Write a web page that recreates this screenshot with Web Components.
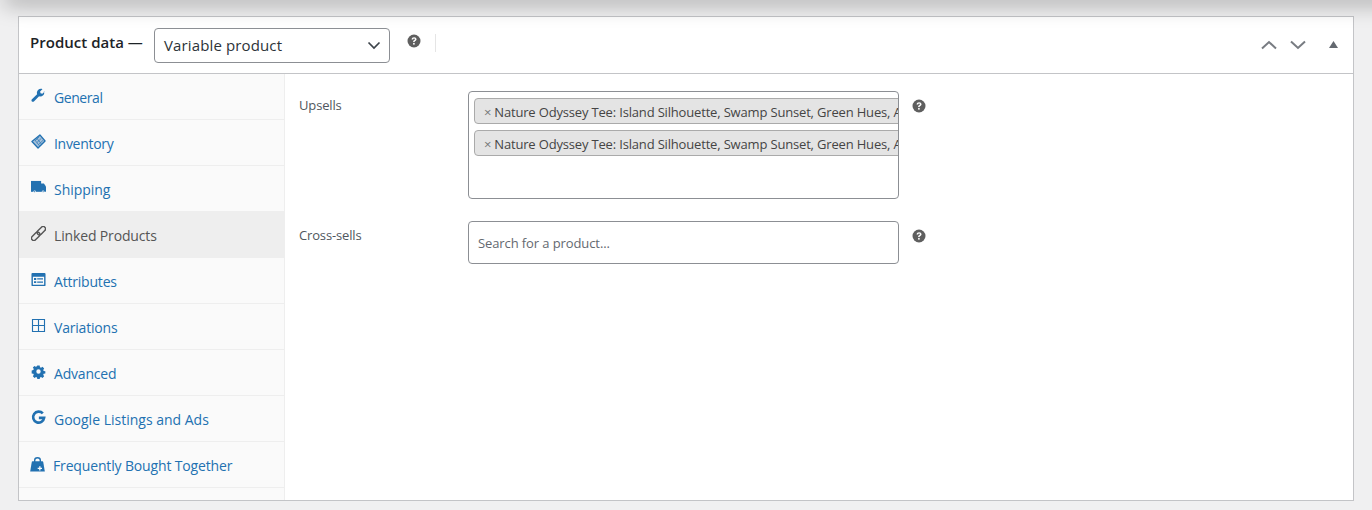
<!DOCTYPE html>
<html>
<head>
<meta charset="utf-8">
<title>Product data</title>
<style>
    html, body { margin: 0; height: 510px; overflow: hidden; background: #f0f0f1; }
    body { font-family: "Open Sans", "Liberation Sans", sans-serif; font-size: 13px; color: #50575e; }
</style>
</head>
<body>
<product-page>
    <pd-header slot="header" title-text="Product data —" type="Variable product"></pd-header>
    <pd-tab slot="tabs" label="General" icon="wrench" style="--ls:-.42px"></pd-tab>
    <pd-tab slot="tabs" label="Inventory" icon="tag" style="--ls:-.3px"></pd-tab>
    <pd-tab slot="tabs" label="Shipping" icon="truck" style="--ls:-.05px"></pd-tab>
    <pd-tab slot="tabs" label="Linked Products" icon="link" active style="--ls:-.15px"></pd-tab>
    <pd-tab slot="tabs" label="Attributes" icon="list" style="--ls:-.2px"></pd-tab>
    <pd-tab slot="tabs" label="Variations" icon="grid" style="--ls:-.2px"></pd-tab>
    <pd-tab slot="tabs" label="Advanced" icon="gear" style="--ls:-.2px"></pd-tab>
    <pd-tab slot="tabs" label="Google Listings and Ads" icon="google" style="--ls:0px"></pd-tab>
    <pd-tab slot="tabs" label="Frequently Bought Together" icon="bag" tight style="--ls:-.15px"></pd-tab>

    <pd-field label="Upsells" style="--field-h:108px">
        <pd-chip>Nature Odyssey Tee: Island Silhouette, Swamp Sunset, Green Hues, Adventure Tee</pd-chip>
        <pd-chip>Nature Odyssey Tee: Island Silhouette, Swamp Sunset, Green Hues, Adventure Tee</pd-chip>
    </pd-field>
    <pd-field label="Cross-sells" placeholder="Search for a product..." style="--field-h:43px"></pd-field>
</product-page>

<script>
const ICONS = {
    wrench: '<path d="M14.6 3.6l-2.5 2.5-1.9-.5-.5-1.9L12.2 1.2C10.6.6 8.7 1 7.5 2.2 6.3 3.4 6 5.1 6.5 6.6L1 12.1c-.7.7-.7 1.6-.1 2.2.6.6 1.6.6 2.2 0l5.5-5.5c1.5.5 3.2.1 4.4-1.1 1.2-1.2 1.5-2.9.6-4.1z"/>',
    tag: '<path d="M9.500 1l5.500 6.500-7.500 7.500L1 8z" fill="#a5c0da" stroke="currentColor" stroke-width="1.400" stroke-linejoin="round"/><path d="M4.300 7.300L9 2.800M6.100 9.300L11 4.600M8 11.300L13 6.600M6.500 4.900L11 10.600M4.500 6.900L9 12.600" stroke="currentColor" stroke-width=".7" fill="none"/>',
    truck: '<path d="M0 1h10.800v11.600H0z"/><path d="M10.500 3.800h3.300L16 7v5.600h-5.500z"/><circle cx="3.900" cy="12.400" r="1.300" fill="#fafafa"/><circle cx="12.900" cy="12.400" r="1.300" fill="#fafafa"/><circle cx="3.900" cy="12.400" r=".6"/><circle cx="12.900" cy="12.400" r=".6"/>',
    link: '<g transform="rotate(-45 8 8)" fill="none" stroke="currentColor" stroke-width="1.500"><rect x="-1.500" y="5.500" width="10.500" height="5" rx="2.500"/><rect x="7" y="5.500" width="10.500" height="5" rx="2.500"/></g>',
    list: '<path fill-rule="evenodd" d="M1.500 1h13c.6 0 1 .4 1 1v12c0 .6-.4 1-1 1h-13c-.6 0-1-.4-1-1V2c0-.6.4-1 1-1zM2 5v8.500h12V5z"/><path d="M3.200 6.400h2.400v2H3.200zM3.200 9.800h2.400v2H3.200zM6.600 6.600h6.200v1.500H6.600zM6.600 10h6.200v1.500H6.600z"/>',
    grid: '<path fill-rule="evenodd" d="M1 1h14v14H1zM2.200 2.200v5.200h5.200V2.200zM8.600 2.200v5.200h5.200V2.200zM2.200 8.600v5.200h5.200V8.600zM8.600 8.600v5.200h5.200V8.600z"/>',
    gear: '<path fill-rule="evenodd" d="M6.600 1h2.800l.4 2 1.200.5 1.700-1.100 2 2-1.100 1.700.5 1.200 2 .4v2.600l-2 .4-.5 1.200 1.100 1.700-2 2-1.700-1.100-1.200.5-.4 2H6.600l-.4-2-1.200-.5-1.700 1.100-2-2 1.100-1.700-.5-1.200-2-.4V6.700l2-.4.500-1.200-1.100-1.700 2-2L4.600 2.500 5.800 2zM8 5.400a2.600 2.600 0 1 0 0 5.200 2.600 2.600 0 0 0 0-5.200z" transform="translate(.8 .8) scale(.9)"/>',
    google: '<path d="M12.600 3.700A5.900 5.900 0 1 0 14 8.400H8.400" fill="none" stroke="currentColor" stroke-width="2.800"/>',
    bag: '<path d="M5 5.500V3.400C5 1.700 6.300.8 8 .8s3 .9 3 2.600v2.100" fill="none" stroke="currentColor" stroke-width="1.500"/><path d="M2.700 4.500h10.600c.4 0 .7.300.8.700L15.800 15.500H.2L1.900 5.200c.1-.4.400-.7.800-.7z"/><path d="M10.500 9.800v4.600M8.200 12.100h4.600" stroke="#fafafa" stroke-width="1.400" fill="none"/>'
};

const HELP = '<svg width="14" height="14" viewBox="0 0 14 14"><circle cx="7" cy="7" r="6.500" fill="#5f5f5f"/><path d="M4.600 5.400C4.700 4 5.700 3.200 7.100 3.200c1.400 0 2.400.8 2.400 2 0 1-.6 1.400-1.200 1.800-.5.300-.7.500-.7 1.100H6.100c0-1 .3-1.500 1-1.900.5-.3.800-.5.800-.9 0-.4-.3-.7-.8-.7-.6 0-.9.300-1 .9z" fill="#fff"/><rect x="6.100" y="8.900" width="1.600" height="1.700" fill="#fff"/></svg>';

customElements.define('product-page', class extends HTMLElement {
    constructor() {
        super();
        this.attachShadow({ mode: 'open' }).innerHTML = `
<style>
    :host { display: block; position: relative; padding: 16px 18px 0; height: 494px; }
    .shade { position: absolute; left: 4px; right: -30px; top: -12px; height: 12px; pointer-events: none; box-shadow: 0 3px 22px rgba(0,0,0,.4); }
    .panel { box-sizing: border-box; height: 485px; background: #fff; border: 1px solid #c3c4c7; display: flex; flex-direction: column; }
    .body { flex: 1; display: flex; min-height: 0; }
    .tabs { box-sizing: border-box; width: 266px; background: #fafafa; border-right: 1px solid #eee; }
    .main { flex: 1; padding: 17px 0 0 14px; display: flex; flex-direction: column; gap: 22px; }
</style>
<div class="panel">
    <slot name="header"></slot>
    <div class="body">
        <div class="tabs"><slot name="tabs"></slot></div>
        <div class="main"><slot></slot></div>
    </div>
</div>
<div class="shade"></div>`;
    }
});

customElements.define('pd-header', class extends HTMLElement {
    constructor() {
        super();
        const title = this.getAttribute('title-text');
        const type = this.getAttribute('type');
        this.attachShadow({ mode: 'open' }).innerHTML = `
<style>
    :host { display: flex; box-sizing: border-box; height: 57px; align-items: flex-start; border-bottom: 1px solid #c3c4c7; color: #1d2327; }
    .title { font-size: 15px; font-weight: 600; margin: 13px 0 0 11px; line-height: 24px; width: 124px; white-space: nowrap; letter-spacing: .02px; }
    .select { box-sizing: border-box; width: 236px; height: 35px; margin-top: 11px; border: 1px solid #8c8f94; border-radius: 4px; display: flex; align-items: center; justify-content: space-between; padding: 0 8px 0 9px; font-size: 15px; letter-spacing: .13px; background: #fff; color: #2c3338; }
    .select span { margin-top: -2px; }
    .help { margin: 17px 0 0 17px; height: 14px; }
    .rule { width: 1px; height: 18px; background: #e5e5e5; margin: 17px 0 0 14px; }
    .ctrl { margin-left: auto; display: flex; align-items: center; height: 56px; padding: 0 15px 0 0; }
    svg.c { display: block; margin-top: -1px; }
</style>
<div class="title">${title}</div>
<div class="select"><span>${type}</span><svg width="14" height="9" viewBox="0 0 14 9"><path d="M1.500 1.500L7 7l5.500-5.500" fill="none" stroke="#3c434a" stroke-width="1.700"/></svg></div>
<div class="help">${HELP}</div>
<div class="rule"></div>
<div class="ctrl">
    <svg class="c" width="16" height="10" viewBox="0 0 16 10"><path d="M1 8.500L8 2l7 6.500" fill="none" stroke="#787c82" stroke-width="2"/></svg>
    <svg class="c" style="margin-left:13px" width="16" height="10" viewBox="0 0 16 10"><path d="M1 1.500L8 8l7-6.500" fill="none" stroke="#787c82" stroke-width="2"/></svg>
    <svg class="c" style="margin-left:23px" width="9" height="7" viewBox="0 0 9 7"><path d="M4.500 0L9 7H0z" fill="#646970"/></svg>
</div>`;
    }
});

customElements.define('pd-tab', class extends HTMLElement {
    constructor() {
        super();
        const icon = ICONS[this.getAttribute('icon')];
        const label = this.getAttribute('label');
        this.attachShadow({ mode: 'open' }).innerHTML = `
<style>
    :host { display: flex; box-sizing: border-box; height: 46px; padding-left: 12px; align-items: center; border-bottom: 1px solid #eee; color: #2271b1; font-size: 14px; letter-spacing: var(--ls, 0); white-space: nowrap; }
    :host([active]) { background: #eee; color: #555; }
    svg { width: 15px; height: 15px; fill: currentColor; margin: -3px 8px 0 0; flex: none; }
    :host([tight]) svg { margin: 0 8px 0 -1px; }
    span { margin-top: 2px; }
</style>
<svg viewBox="0 0 16 16">${icon}</svg><span>${label}</span>`;
    }
});

customElements.define('pd-field', class extends HTMLElement {
    constructor() {
        super();
        const label = this.getAttribute('label');
        const ph = this.getAttribute('placeholder');
        this.attachShadow({ mode: 'open' }).innerHTML = `
<style>
    :host { display: flex; align-items: flex-start; font-size: 13px; letter-spacing: -.17px; color: #50575e; }
    label { width: 169px; flex: none; line-height: 18px; margin-top: 5px; letter-spacing: -.15px; }
    .box { box-sizing: border-box; width: 431px; height: var(--field-h); border: 1px solid #8c8f94; border-radius: 4px; overflow: hidden; background: #fff; padding: 6px 0 0 5px; display: flex; flex-direction: column; gap: 6px; }
    .ph { line-height: 43px; margin: -6px 0 0 4px; color: #646970; letter-spacing: -.1px; }
    .help { margin: 8px 0 0 13px; height: 14px; }
</style>
<label>${label}</label>
<div class="box">${ph ? `<div class="ph">${ph}</div>` : ''}<slot></slot></div>
<div class="help">${HELP}</div>`;
    }
});

customElements.define('pd-chip', class extends HTMLElement {
    constructor() {
        super();
        this.attachShadow({ mode: 'open' }).innerHTML = `
<style>
    :host { display: flex; box-sizing: border-box; height: 26px; width: 480px; align-items: center; background: #e4e4e4; border: 1px solid #aaa; border-radius: 4px; white-space: nowrap; color: #444; padding-left: 9px; }
    i { font-style: normal; color: #777; margin-right: 3px; font-size: 13px; margin-top: 2px; }
    span { margin-top: 2px; }
</style>
<i>×</i><span><slot></slot></span>`;
    }
});
</script>
</body>
</html>
